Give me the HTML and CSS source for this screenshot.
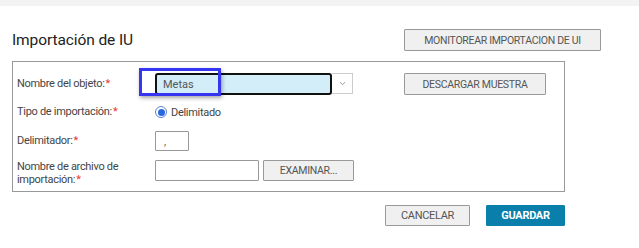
FILE: index.html
```html
<!DOCTYPE html>
<html lang="es">
<head>
    <meta charset="UTF-8">
    <meta name="viewport" content="width=device-width, initial-scale=1.0">
    <title>Importación de IU</title>
    <link rel="stylesheet" href="styles.css">
</head>
<body>
    <div class="topbar"></div>

    <header class="page-head">
        <h1>Importación de IU</h1>
        <button type="button" class="btn">MONITOREAR IMPORTACION DE UI</button>
    </header>

    <form class="import-box">
        <div class="row row-object">
            <label class="lbl">Nombre del objeto:<span class="req">*</span></label>
            <div class="ctl">
                <div class="combo">
                    <input type="text" class="combo-input" value="Metas">
                    <span class="combo-arrow">
                        <svg width="7" height="5" viewBox="0 0 7 5"><path d="M1 1.2 L3.5 3.6 L6 1.2" fill="none" stroke="#999" stroke-width="1"/></svg>
                    </span>
                </div>
                <button type="button" class="btn btn-sample">DESCARGAR MUESTRA</button>
            </div>
            <span class="focus-mark"></span>
        </div>

        <div class="row row-type">
            <label class="lbl">Tipo de importación:<span class="req">*</span></label>
            <div class="ctl">
                <span class="radio"><span class="radio-dot"></span></span>
                <span class="radio-text">Delimitado</span>
            </div>
        </div>

        <div class="row row-delim">
            <label class="lbl">Delimitador:<span class="req">*</span></label>
            <div class="ctl">
                <input type="text" class="field field-delim" value=",">
            </div>
        </div>

        <div class="row row-file">
            <label class="lbl lbl-two">
                <span class="lbl-line">Nombre de archivo de</span>
                <span class="lbl-line">importación:<span class="req">*</span></span>
            </label>
            <div class="ctl">
                <input type="text" class="field field-file">
                <button type="button" class="btn btn-browse">EXAMINAR...</button>
            </div>
        </div>
    </form>

    <div class="actions">
        <button type="button" class="btn btn-cancel">CANCELAR</button>
        <button type="button" class="btn btn-save">GUARDAR</button>
    </div>
</body>
</html>
```

FILE: styles.css
```css
body { margin: 0; font-family: Roboto, "Liberation Sans", sans-serif; color: #444; background: #fff; }
.topbar { height: 6px; background-color: #f3f3f3; }

.page-head { display: flex; justify-content: space-between; align-items: center; padding: 23px 38px 0 12px; height: 22px; }
.page-head h1 { margin: 0; font-size: 15.5px; font-weight: 400; color: #222; letter-spacing: -0.1px; }

.btn { font-family: inherit; font-size: 10.5px; color: #555; background-color: #f0f0f0; border: 1px solid #999; border-radius: 1px; padding: 0; height: 22px; cursor: pointer; letter-spacing: -0.3px; }
.page-head .btn { width: 197px; }

.import-box { position: relative; margin: 10px 0 0 12px; width: 547px; height: 118px; border: 1px solid #999; padding: 11px 0 0 4px; box-sizing: content-box; }

.row { display: flex; align-items: center; }
.lbl { width: 138px; font-size: 11px; line-height: 12px; color: #444; letter-spacing: -0.3px; }
.lbl-two { line-height: 13px; margin-top: 5px; }
.lbl-line { display: block; }
.req { color: #e33; margin-left: 1px; }
.ctl { display: flex; align-items: center; }

.row-object { height: 22px; }
.combo { display: flex; height: 22px; }
.combo-input { width: 177px; height: 22px; box-sizing: border-box; border: 2px solid #111; border-radius: 3px; background-color: #d3edf9; padding: 0 0 0 6px; font-family: inherit; font-size: 11px; color: #555; outline: none; }
.combo-arrow { width: 21px; height: 21px; border: 1px solid #ccc; border-left: none; display: flex; align-items: center; justify-content: center; box-sizing: border-box; }
.btn-sample { width: 142px; margin-left: 51px; }
.focus-mark { position: absolute; left: 126px; top: 6px; width: 76px; height: 22px; border: 3px solid #3636f2; box-shadow: 1px 2px 4px rgba(0, 0, 0, 0.35); }

.row-type { height: 18px; margin-top: 8px; }
.radio { width: 10px; height: 10px; border: 1px solid #5b82d6; border-radius: 50%; display: flex; align-items: center; justify-content: center; }
.radio-dot { width: 7px; height: 7px; border-radius: 50%; background-color: #2767e0; }
.radio-text { margin-left: 4px; font-size: 11px; color: #444; letter-spacing: -0.3px; }

.row-delim { height: 20px; margin-top: 10px; }
.field { height: 20px; box-sizing: border-box; border: 1px solid #999; border-radius: 1px; font-family: inherit; font-size: 10.5px; color: #555; padding: 0 0 0 8px; }
.field-delim { width: 34px; }

.row-file { height: 21px; margin-top: 9px; }
.field-file { width: 104px; height: 21px; }
.btn-browse { width: 91px; height: 21px; margin-left: 4px; }

.actions { display: flex; justify-content: flex-end; gap: 16px; width: 565px; margin-top: 13px; }
.btn-cancel { width: 85px; height: 21px; font-size: 11px; }
.btn-save { width: 79px; height: 21px; background-color: #0b7fab; border-color: #0b7fab; color: #fff; font-weight: 700; font-size: 11px; }
```
